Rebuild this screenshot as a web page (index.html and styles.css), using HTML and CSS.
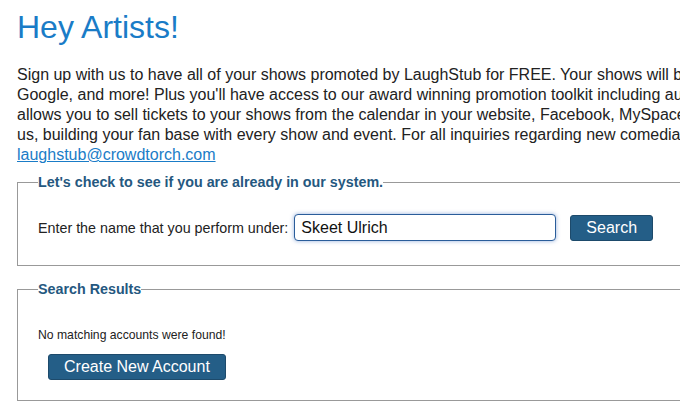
FILE: index.html
```html
<!DOCTYPE html>
<html lang="en">
<head>
    <meta charset="UTF-8">
    <title>Hey Artists! - LaughStub</title>
    <link rel="stylesheet" href="styles.css">
</head>
<body>
    <div class="page">
        <h1>Hey Artists!</h1>

        <!-- Intro -->
        <p class="intro">Sign up with us to have all of your shows promoted by LaughStub for FREE. Your shows will be listed on LaughStub, Yahoo,<br>
            Google, and more! Plus you'll have access to our award winning promotion toolkit including automated email, which<br>
            allows you to sell tickets to your shows from the calendar in your website, Facebook, MySpace, and more, all through<br>
            us, building your fan base with every show and event. For all inquiries regarding new comedian accounts, please email<br>
            <a href="mailto:laughstub@crowdtorch.com">laughstub@crowdtorch.com</a></p>

        <!-- Lookup -->
        <fieldset class="box lookup">
            <legend>Let's check to see if you are already in our system.</legend>
            <div class="lookup-row">
                <label for="performerName">Enter the name that you perform under:</label>
                <input type="text" id="performerName" value="Skeet Ulrich">
                <button class="btn">Search</button>
            </div>
        </fieldset>

        <!-- Results -->
        <fieldset class="box results">
            <legend>Search Results</legend>
            <p class="no-results">No matching accounts were found!</p>
            <button class="btn btn-create">Create New Account</button>
        </fieldset>
    </div>
</body>
</html>
```

FILE: styles.css
```css
body {
    margin: 0;
    background-color: #FFFFFF;
    color: #222;
    font-family: "Liberation Sans", Arial, sans-serif;
    overflow: hidden;
}

.page {
    width: 1000px;
    padding: 0 0 0 17px;
}

h1 {
    color: #1a7cc7;
    font-size: 32px;
    font-weight: normal;
    margin: 9px 0 19px 0;
}

.intro {
    font-size: 16px;
    line-height: 20px;
    margin: 0 0 9px 0;
    white-space: nowrap;
}

.intro a {
    color: #1a7cc7;
}

.box {
    border: 1px solid #999;
    margin: 0;
    padding: 0 20px;
}

.box legend {
    color: #25587f;
    font-size: 14.3px;
    font-weight: bold;
    padding: 0;
}

.lookup {
    padding-top: 24px;
    padding-bottom: 24px;
}

.lookup-row {
    display: flex;
    align-items: center;
    font-size: 14.3px;
}

.lookup-row input {
    width: 248px;
    height: 25px;
    padding: 0 6px;
    margin: 0 14px 0 6px;
    font-family: inherit;
    font-size: 16px;
    color: #111;
    border: 1px solid #2a5d9a;
    border-radius: 4px;
    box-shadow: 0 0 4px rgba(60, 110, 190, 0.55);
    outline: none;
}

.btn {
    background-color: #245e87;
    color: #FFFFFF;
    border: 1px solid #1d4a6b;
    border-radius: 3px;
    font-family: inherit;
    font-size: 16px;
    padding: 3px 15px;
    cursor: pointer;
}

.results {
    margin-top: 15px;
    padding-top: 31px;
    padding-bottom: 20px;
}

.no-results {
    font-size: 12.2px;
    margin: 0 0 12px 0;
}

.btn-create {
    margin-left: 10px;
}
```
